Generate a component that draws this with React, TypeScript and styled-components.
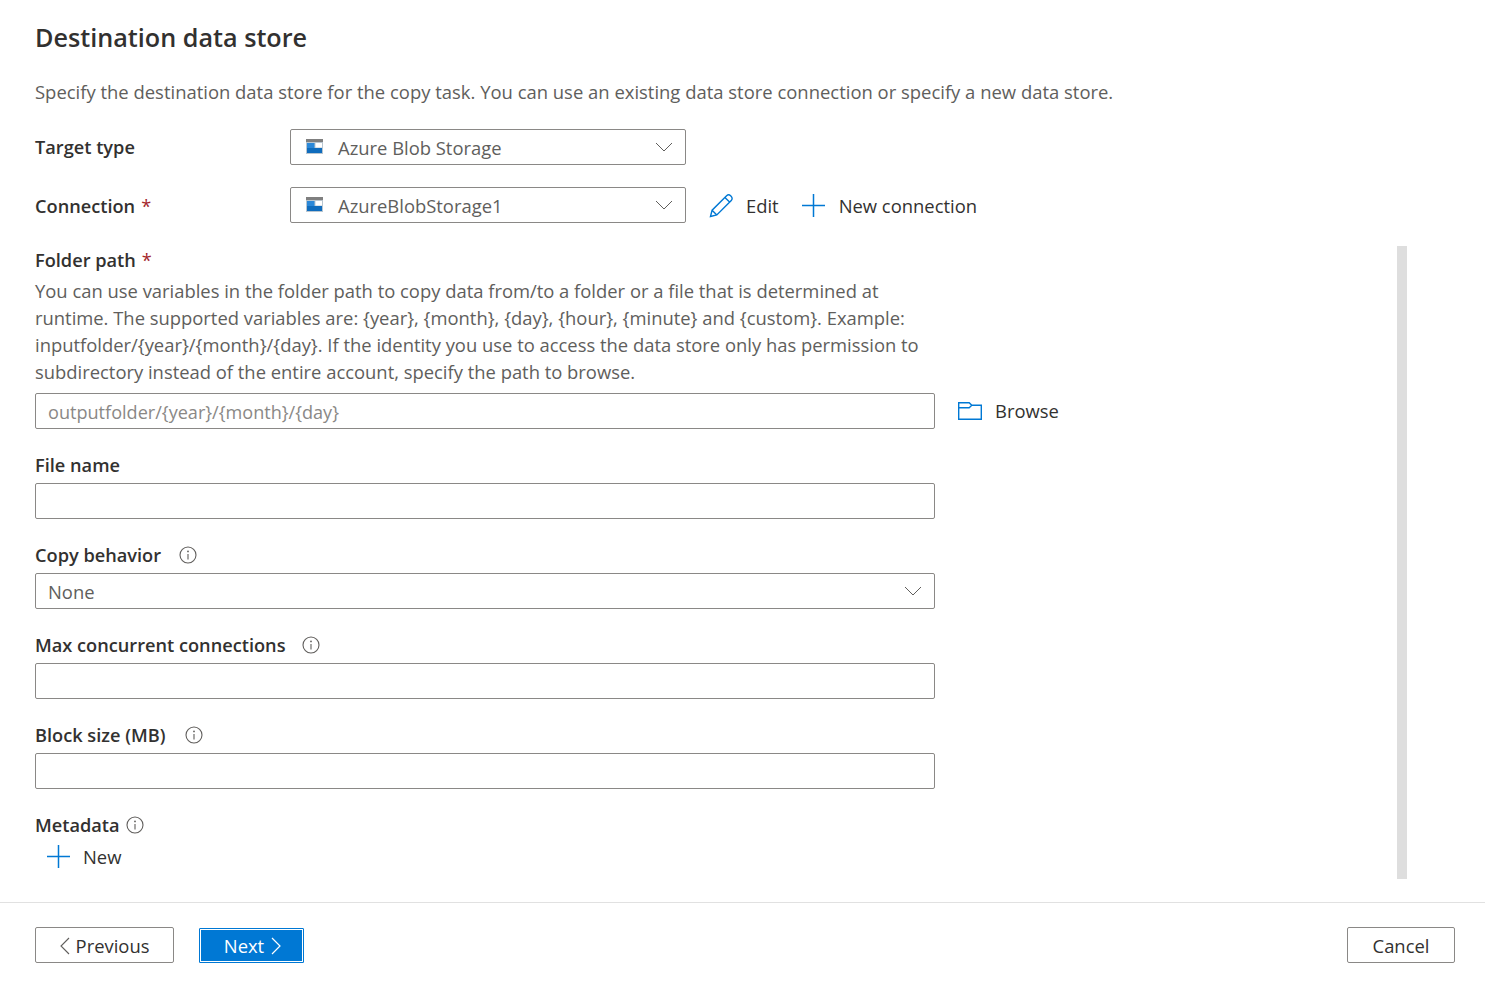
import React from "react";
import styled, { createGlobalStyle } from "styled-components";

const Global = createGlobalStyle`
  html, body { margin: 0; padding: 0; background: #fff; }
  body { font-family: "Open Sans", "Noto Sans", "Liberation Sans", sans-serif; font-size: 18.4px; color: #323130; }
  * { box-sizing: border-box; }
`;

const Page = styled.div`
  width: 1485px;
  height: 986px;
  display: flex;
  flex-direction: column;
  overflow: hidden;
`;
const Top = styled.div`
  padding: 0 30px 0 35px;
`;
const Title = styled.h1`
  margin: 0;
  padding-top: 19px;
  height: 57px;
  font-size: 25.2px;
  line-height: 36px;
  font-weight: 600;
  color: #323130;
`;
const Description = styled.p`
  margin: 0;
  padding-top: 21px;
  height: 72px;
  font-size: 18.45px;
  line-height: 28px;
  color: #605e5c;
`;
const TopRow = styled.div<{ $gap: number }>`
  display: flex;
  align-items: center;
  height: 36px;
  margin-bottom: ${(p) => p.$gap}px;
`;
const RowLabel = styled.div<{ $drop?: number }>`
  width: 255px;
  padding-top: ${(p) => p.$drop ?? 0}px;
  font-size: 18.2px;
  font-weight: 600;
  color: #323130;
`;
const Required = styled.span`
  color: #a4262c;
  margin-left: 6px;
  font-weight: 400;
`;
const Select = styled.div<{ $width: number }>`
  width: ${(p) => p.$width}px;
  height: 36px;
  border: 1px solid #8a8886;
  border-radius: 2px;
  display: flex;
  align-items: center;
  padding: 1px 12px 0 15px;
  color: #605e5c;
  background: #fff;
`;
const SelectText = styled.span`
  flex: 1;
`;
const Command = styled.div`
  display: flex;
  align-items: center;
  gap: 12px;
  color: #323130;
  line-height: 28px;
`;
const Commands = styled.div`
  display: flex;
  align-items: center;
  gap: 23px;
  margin-left: 23px;
  padding-top: 1px;
`;
const AddCommand = styled(Command)`
  gap: 14px;
`;
const BrowseCommand = styled(Command)`
  gap: 13px;
`;
const Scroller = styled.div`
  height: 633px;
  margin-top: 23px;
  padding: 0 78px 0 35px;
  display: flex;
  justify-content: space-between;
`;
const Form = styled.div`
  width: 1030px;
  display: flex;
  flex-direction: column;
`;
const Scrollbar = styled.div`
  width: 10px;
  height: 633px;
  background: #dedede;
`;
const FolderLabel = styled.div`
  font-size: 18.2px;
  font-weight: 600;
  line-height: 28px;
`;
const Help = styled.p`
  margin: 3px 0 8px;
  width: 900px;
  line-height: 27px;
  color: #605e5c;
`;
const InputRow = styled.div`
  display: flex;
  align-items: center;
  gap: 23px;
`;
const Input = styled.div`
  width: 900px;
  height: 36px;
  border: 1px solid #8a8886;
  border-radius: 2px;
  display: flex;
  align-items: center;
  padding: 1px 12px 0;
  font-size: 18.1px;
  color: #8a8886;
  background: #fff;
`;
const WideSelect = styled(Select)`
  padding: 1px 12px 0 12px;
`;
const FieldLabel = styled.div`
  height: 36px;
  margin-top: 18px;
  display: flex;
  align-items: center;
  font-size: 18.2px;
  font-weight: 600;
  color: #323130;
`;
const InfoWrap = styled.span<{ $gap: number }>`
  display: inline-flex;
  margin-left: ${(p) => p.$gap}px;
`;
const AddRow = styled.div`
  display: flex;
  align-items: center;
  gap: 13px;
  height: 26px;
  padding-left: 12px;
  color: #323130;
`;
const Footer = styled.div`
  margin-top: 23px;
  border-top: 1px solid #e1e1e1;
  padding: 24px 30px 0 35px;
  display: flex;
  align-items: flex-start;
`;
const Button = styled.div`
  height: 36px;
  border: 1px solid #8a8886;
  border-radius: 2px;
  display: flex;
  align-items: center;
  justify-content: center;
  gap: 6px;
  padding-top: 1px;
  color: #323130;
  background: #fff;
`;
const PreviousButton = styled(Button)`
  width: 139px;
`;
const NextButton = styled(Button)`
  width: 105px;
  height: 35px;
  margin-left: 25px;
  margin-top: 1px;
  padding: 0 0 0 2px;
  gap: 7px;
  background: #0078d4;
  color: #fff;
  border: 1px solid #0078d4;
  border-radius: 1px;
  box-shadow: inset 0 0 0 1px #fff;
`;
const CancelButton = styled(Button)`
  width: 108px;
  margin-left: auto;
`;

const helpText =
  "You can use variables in the folder path to copy data from/to a folder or a file that is determined at runtime. The supported variables are: {year}, {month}, {day}, {hour}, {minute} and {custom}. Example: inputfolder/{year}/{month}/{day}. If the identity you use to access the data store only has permission to subdirectory instead of the entire account, specify the path to browse.";
const folderPlaceholder = "outputfolder/{year}/{month}/{day}";

const StoreIcon = () => (
  <svg width="17" height="15" viewBox="0 0 17 15" style={{ marginRight: 15, marginBottom: 3, flex: "none" }}>
    <rect width="17" height="15" fill="#b9c6d0" />
    <rect width="17" height="3" fill="#7f7f7f" />
    <rect x="1" y="4" width="7.5" height="5" fill="#2b88d8" />
    <rect x="1" y="9" width="15" height="5" fill="#0f6cbd" />
    <rect x="9.5" y="4" width="6.5" height="4.5" fill="#ffffff" />
  </svg>
);
const Chevron = () => (
  <svg width="18" height="10" viewBox="0 0 18 10" style={{ flex: "none", marginBottom: 2 }}>
    <path d="M1 1l8 8 8-8" fill="none" stroke="#605e5c" strokeWidth="1" />
  </svg>
);
const Pencil = () => (
  <svg width="25" height="25" viewBox="0 0 25 25">
    <path
      d="M1.5 23.5l1.6-6.3L17.6 2.7c1.1-1.1 2.9-1.1 4 0l.7.7c1.1 1.1 1.1 2.9 0 4L7.8 21.9zM3.1 17.2l4.7 4.7M15.9 4.4l4.7 4.7"
      fill="none"
      stroke="#0078d4"
      strokeWidth="1.4"
    />
  </svg>
);
const Plus = () => (
  <svg width="23" height="23" viewBox="0 0 23 23" style={{ flex: "none" }}>
    <path d="M11.5 0v23M0 11.5h23" stroke="#0078d4" strokeWidth="1.5" fill="none" />
  </svg>
);
const Folder = () => (
  <svg width="24" height="18" viewBox="0 0 24 18">
    <path
      d="M.7.7h10.5l2.6 2.6h9.5v14H.7zM.7 5.7h10.5l2.6-2.4"
      fill="none"
      stroke="#0078d4"
      strokeWidth="1.4"
    />
  </svg>
);
const Info = () => (
  <svg width="18" height="18" viewBox="0 0 18 18">
    <circle cx="9" cy="9" r="8" fill="none" stroke="#605e5c" strokeWidth="1.1" />
    <path d="M9 8v5.5" stroke="#605e5c" strokeWidth="1.1" />
    <circle cx="9" cy="5.4" r="0.9" fill="#605e5c" />
  </svg>
);
const Left = () => (
  <svg width="10" height="18" viewBox="0 0 10 18">
    <path d="M9 1L1 9l8 8" fill="none" stroke="#605e5c" strokeWidth="1.1" />
  </svg>
);
const Right = () => (
  <svg width="10" height="18" viewBox="0 0 10 18">
    <path d="M1 1l8 8-8 8" fill="none" stroke="#fff" strokeWidth="1.2" />
  </svg>
);

export default function App() {
  return (
    <Page>
      <Global />
      <Top>
        <Title>Destination data store</Title>
        <Description>
          Specify the destination data store for the copy task. You can use an existing data store connection or specify a new data store.
        </Description>
        <TopRow $gap={22}>
          <RowLabel>Target type</RowLabel>
          <Select $width={396}>
            <StoreIcon />
            <SelectText>Azure Blob Storage</SelectText>
            <Chevron />
          </Select>
        </TopRow>
        <TopRow $gap={0}>
          <RowLabel $drop={2}>
            Connection<Required>*</Required>
          </RowLabel>
          <Select $width={396}>
            <StoreIcon />
            <SelectText>AzureBlobStorage1</SelectText>
            <Chevron />
          </Select>
          <Commands>
            <Command>
              <Pencil />
              Edit
            </Command>
            <AddCommand>
              <Plus />
              New connection
            </AddCommand>
          </Commands>
        </TopRow>
      </Top>
      <Scroller>
        <Form>
          <FolderLabel>
            Folder path<Required>*</Required>
          </FolderLabel>
          <Help>{helpText}</Help>
          <InputRow>
            <Input>{folderPlaceholder}</Input>
            <BrowseCommand>
              <Folder />
              Browse
            </BrowseCommand>
          </InputRow>
          <FieldLabel>File name</FieldLabel>
          <Input />
          <FieldLabel>
            Copy behavior
            <InfoWrap $gap={18}>
              <Info />
            </InfoWrap>
          </FieldLabel>
          <WideSelect $width={900}>
            <SelectText>None</SelectText>
            <Chevron />
          </WideSelect>
          <FieldLabel>
            Max concurrent connections
            <InfoWrap $gap={16}>
              <Info />
            </InfoWrap>
          </FieldLabel>
          <Input />
          <FieldLabel>
            Block size (MB)
            <InfoWrap $gap={20}>
              <Info />
            </InfoWrap>
          </FieldLabel>
          <Input />
          <FieldLabel>
            Metadata
            <InfoWrap $gap={6}>
              <Info />
            </InfoWrap>
          </FieldLabel>
          <AddRow>
            <Plus />
            New
          </AddRow>
        </Form>
        <Scrollbar />
      </Scroller>
      <Footer>
        <PreviousButton>
          <Left />
          Previous
        </PreviousButton>
        <NextButton>
          Next
          <Right />
        </NextButton>
        <CancelButton>Cancel</CancelButton>
      </Footer>
    </Page>
  );
}
